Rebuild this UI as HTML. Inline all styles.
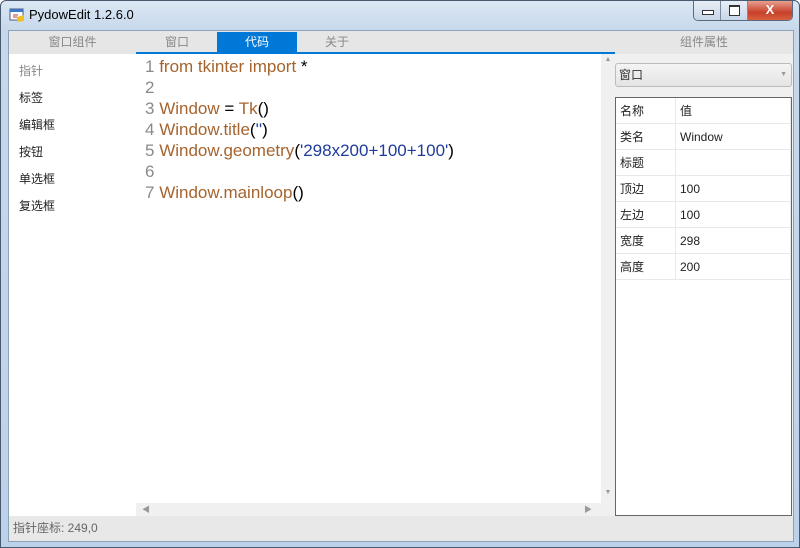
<!DOCTYPE html>
<html><head><meta charset="utf-8"><style>
body{margin:0;width:800px;height:548px;overflow:hidden;font-family:"Liberation Sans","Microsoft YaHei","Noto Sans CJK SC",sans-serif;}
.win{position:absolute;left:0;top:0;width:798px;height:546px;border:1px solid #4a5a6e;border-radius:6px 6px 0 0;background:linear-gradient(#dbe7f4,#c7d8eb 30px,#bcd1ea);}
.abs{position:absolute}
.title{left:28px;top:6px;font-size:13px;color:#000}
.client{left:7px;top:29px;width:784px;height:510px;background:#fff;border:1px solid #8da2b8}
.cjk{font-family:"Liberation Sans","Noto Sans CJK SC",sans-serif}
.hdr{background:#e6e6e6;color:#888;font-size:12px;text-align:center;line-height:23px}
.item{position:absolute;left:10px;font-size:12px;color:#222}
.code{font-size:17px;line-height:21px;color:#a5642d;white-space:pre}
.n{color:#8a8a8a}.s{color:#1f3c9c}.b{color:#000}
td{border-right:1px solid #e8e8e8;border-bottom:1px solid #e8e8e8;height:25px;padding:0 0 0 4px;font-size:12px;color:#222}
table{border-collapse:collapse}
</style></head><body>
<div class="win">
 <svg class="abs" style="left:8px;top:6px" width="16" height="16"><rect x="1" y="2" width="13" height="11" fill="#fff" stroke="#557"/><rect x="1" y="2" width="13" height="3" fill="#3a78c8"/><path d="M4 8h5M4 10h4" stroke="#c33"/><path d="M8 10l7-2v6l-7 1z" fill="#f0c020"/></svg>
 <div class="abs title">PydowEdit 1.2.6.0</div>
 <div class="abs" style="left:692px;top:0;width:98px;height:19px;border:1px solid #5a6a80;border-top:none;border-radius:0 0 5px 5px;overflow:hidden;display:flex">
  <div style="width:26px;background:linear-gradient(#e8eef6,#c8d6e8);border-right:1px solid #7a8aa0;position:relative"><div class="abs" style="left:8px;top:9px;width:10px;height:3px;border:1px solid #333;background:#fff"></div></div>
  <div style="width:26px;background:linear-gradient(#e8eef6,#c8d6e8);border-right:1px solid #7a8aa0;position:relative"><div class="abs" style="left:8px;top:4px;width:9px;height:8px;border:1px solid #333;border-top-width:2px;background:#fff"></div></div>
  <div style="flex:1;background:linear-gradient(#e8a090,#c8402a 60%,#d86040);color:#fff;font-weight:bold;font-size:13px;text-align:center;line-height:18px">X</div>
 </div>
 <div class="abs client">
  <div class="abs hdr cjk" style="left:0;top:0;width:127px;height:23px">窗口组件</div>
  <div class="item cjk" style="top:31px;color:#888">指针</div>
  <div class="item cjk" style="top:58px">标签</div>
  <div class="item cjk" style="top:85px">编辑框</div>
  <div class="item cjk" style="top:112px">按钮</div>
  <div class="item cjk" style="top:139px">单选框</div>
  <div class="item cjk" style="top:166px">复选框</div>
  <div class="abs" style="left:127px;top:0;width:479px;height:22px;background:#e6e6e6"></div>
  <div class="abs hdr cjk" style="left:128px;top:1px;width:80px;height:21px;line-height:21px;background:transparent">窗口</div>
  <div class="abs hdr cjk" style="left:208px;top:1px;width:80px;height:21px;line-height:21px;background:#0078d7;color:#fff">代码</div>
  <div class="abs hdr cjk" style="left:288px;top:1px;width:80px;height:21px;line-height:21px;background:transparent">关于</div>
  <div class="abs" style="left:127px;top:21px;width:479px;height:2px;background:#0078d7"></div>
  <div class="abs code" style="left:136px;top:25px"><span class="n">1</span> from tkinter import <span class="b">*</span>
<span class="n">2</span>
<span class="n">3</span> Window <span class="b">=</span> Tk<span class="b">()</span>
<span class="n">4</span> Window.title<span class="b">(</span><span class="s">''</span><span class="b">)</span>
<span class="n">5</span> Window.geometry<span class="b">(</span><span class="s">'298x200+100+100'</span><span class="b">)</span>
<span class="n">6</span>
<span class="n">7</span> Window.mainloop<span class="b">()</span></div>
  <div class="abs" style="left:592px;top:23px;width:14px;height:449px;background:#f0f0f0;color:#999;font-size:7px;text-align:center"><div style="margin-top:2px">▲</div><div class="abs" style="top:435px;width:14px">▼</div></div>
  <div class="abs" style="left:127px;top:472px;width:465px;height:13px;background:#f0f0f0;color:#999;font-size:8px"><span class="abs" style="left:6px;top:1px">◀</span><span class="abs" style="left:448px;top:1px">▶</span></div>
  <div class="abs" style="left:592px;top:472px;width:14px;height:13px;background:#f0f0f0"></div>
  <div class="abs" style="left:606px;top:23px;width:178px;height:462px;background:#f0f0f0"></div>
  <div class="abs hdr cjk" style="left:606px;top:0;width:178px;height:23px">组件属性</div>
  <div class="abs cjk" style="left:606px;top:32px;width:175px;height:22px;border:1px solid #bbb;border-radius:3px;background:linear-gradient(#f4f4f4,#e4e4e4);font-size:12px;line-height:22px;color:#333;text-indent:3px">窗口<span class="abs" style="right:4px;top:0;font-size:7px;color:#999">▼</span></div>
  <div class="abs" style="left:606px;top:66px;width:175px;height:417px;border:1px solid #666;background:#fff">
   <table class="cjk"><tr><td style="width:55px">名称</td><td style="width:110px">值</td></tr>
   <tr><td>类名</td><td>Window</td></tr><tr><td>标题</td><td></td></tr><tr><td>顶边</td><td>100</td></tr><tr><td>左边</td><td>100</td></tr><tr><td>宽度</td><td>298</td></tr><tr><td>高度</td><td>200</td></tr></table>
  </div>
  <div class="abs cjk" style="left:0;top:485px;width:784px;height:25px;background:#e8e8e8;font-size:12px;color:#666;line-height:25px;text-indent:4px">指针座标: 249,0</div>
 </div>
</div>
</body></html>
